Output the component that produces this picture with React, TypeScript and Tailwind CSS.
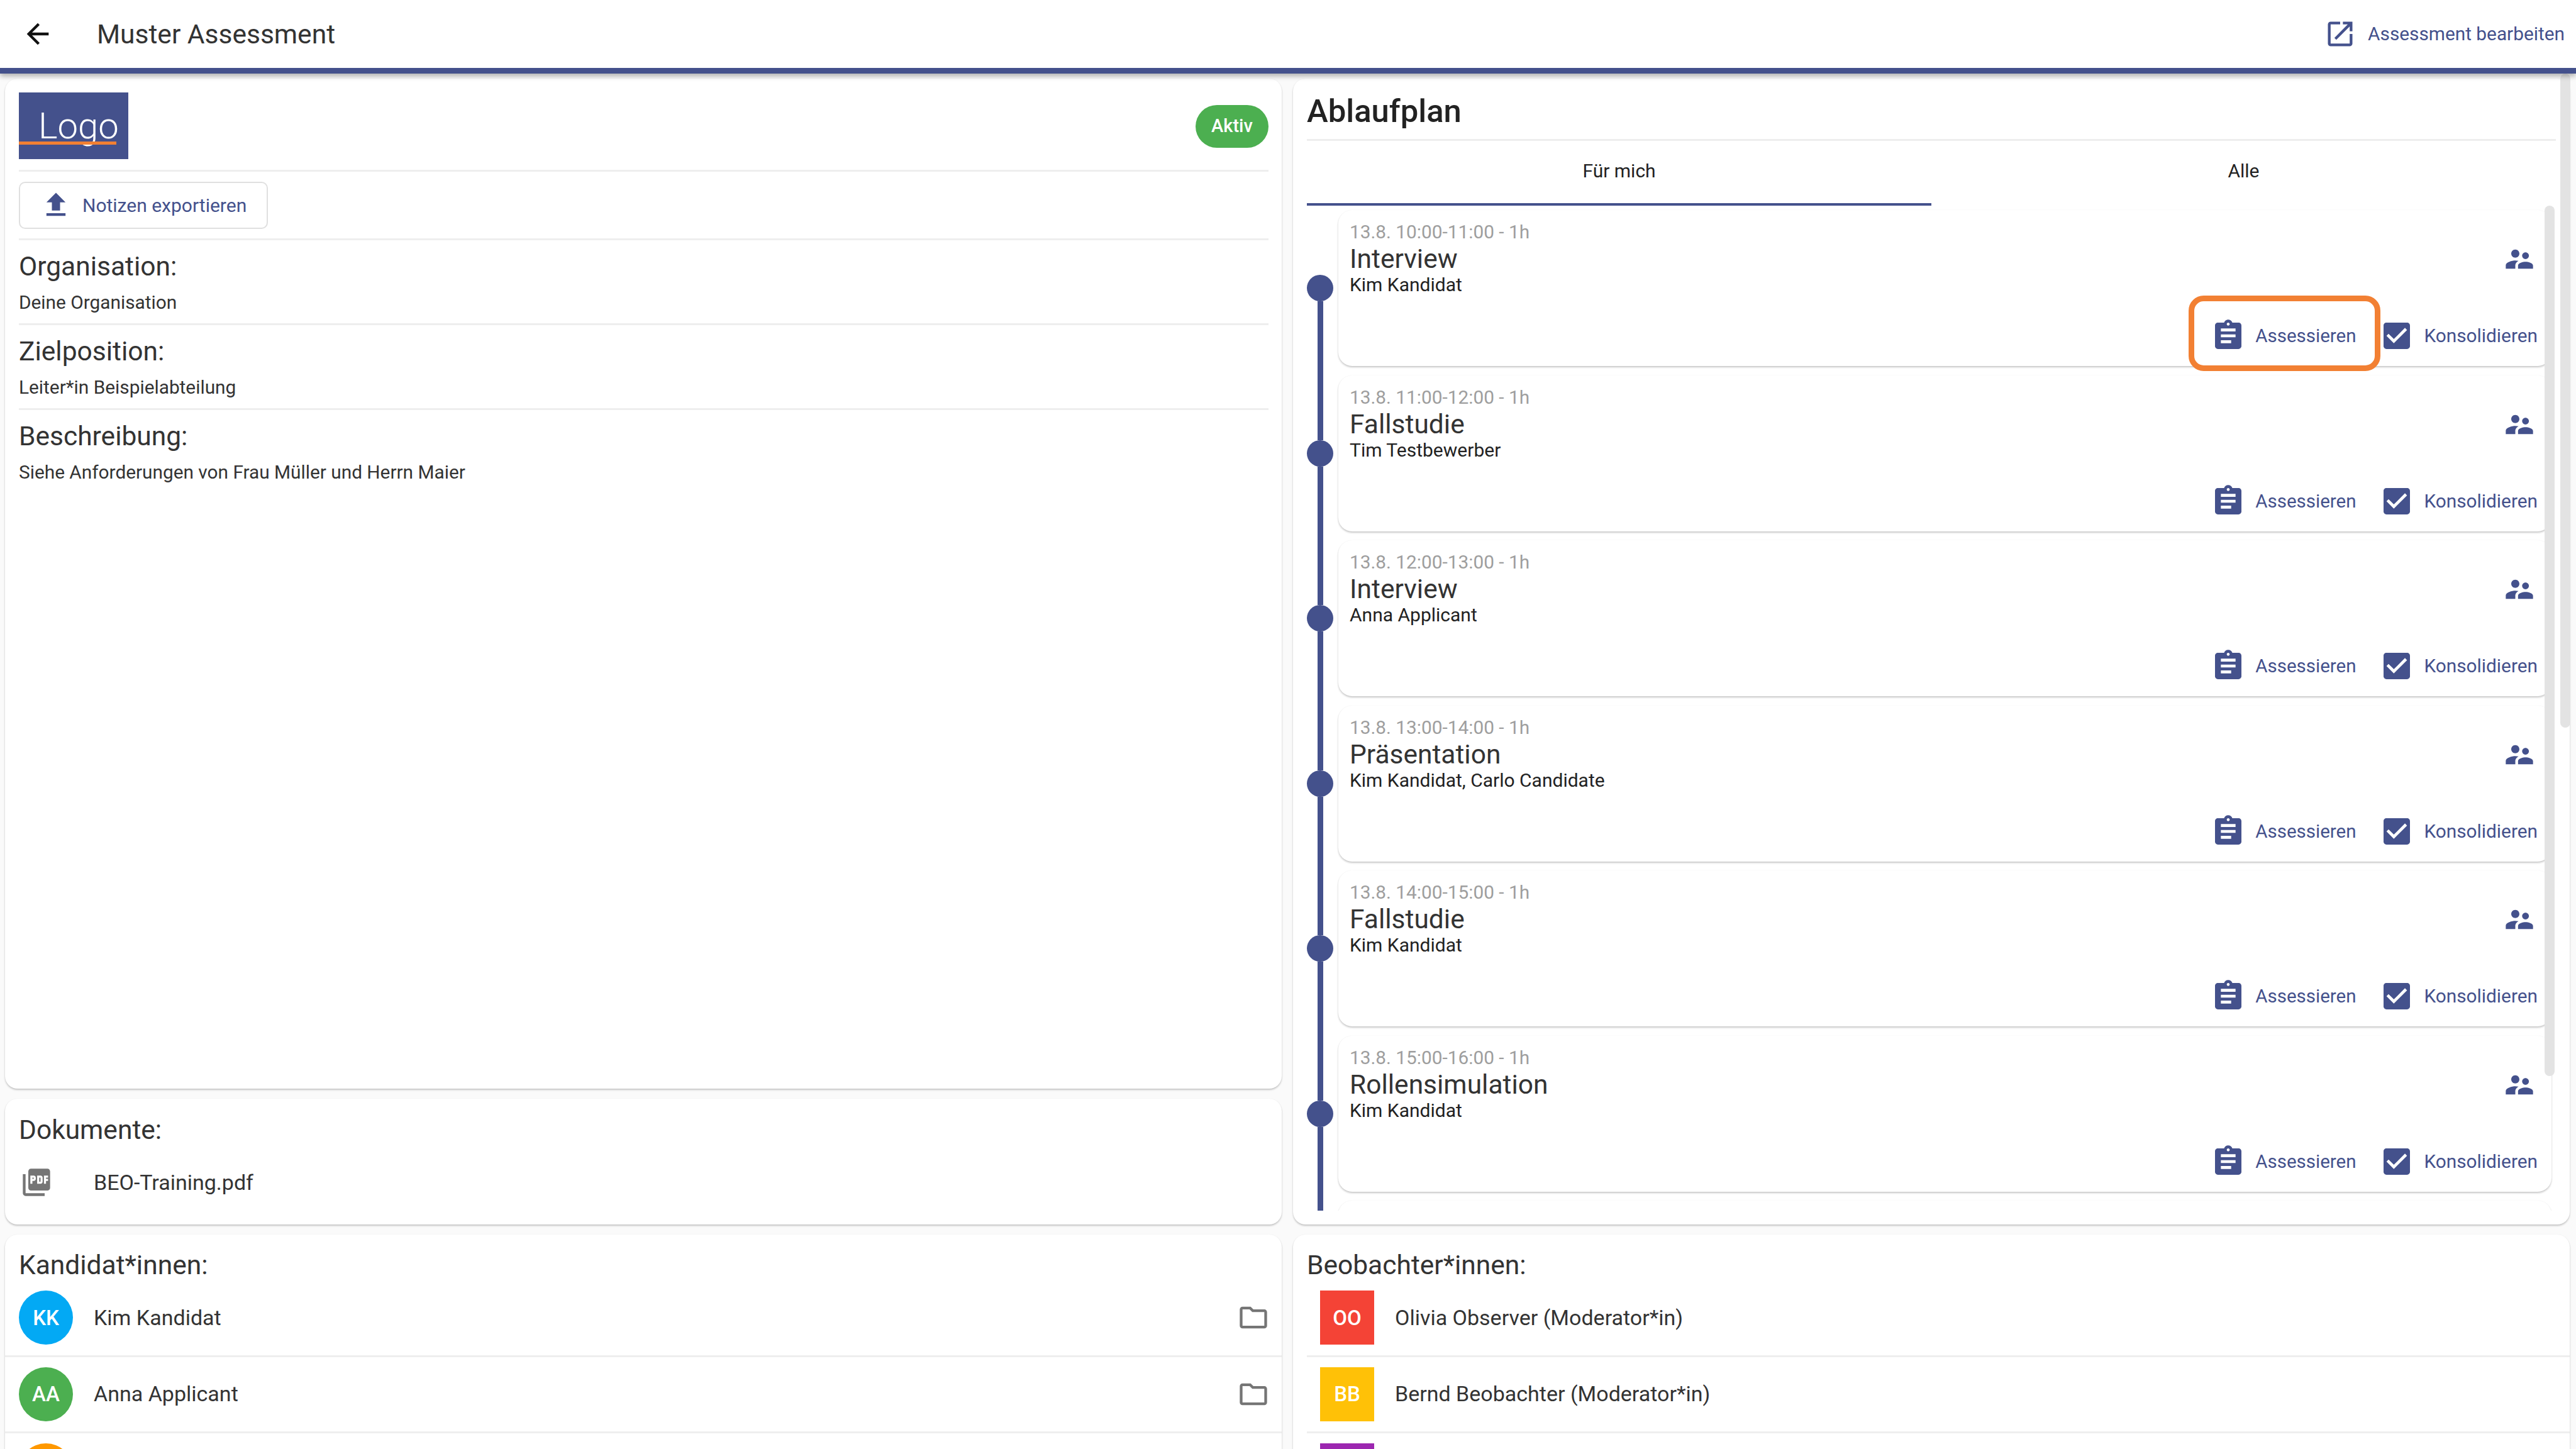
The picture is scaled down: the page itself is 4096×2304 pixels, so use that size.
function Ic({ d, cls }: { d: string; cls: string }) {
  return (
    <svg viewBox="0 0 24 24" className={cls}>
      <path d={d} />
    </svg>
  );
}

const pc = "fill-[#44518c]";
const gc = "fill-[#757575]";

const back = "M20 11H7.83l5.59-5.59L12 4l-8 8 8 8 1.41-1.41L7.83 13H20v-2z";
const launch = "M19 19H5V5h7V3H5c-1.11 0-2 .9-2 2v14c0 1.1.89 2 2 2h14c1.1 0 2-.9 2-2v-7h-2v7zM14 3v2h3.59l-9.83 9.83 1.41 1.41L19 6.41V10h2V3h-7z";
const upload = "M9 16h6v-6h4l-7-7-7 7h4zm-4 2h14v2H5z";
const assignment = "M19 3h-4.18C14.4 1.84 13.3 1 12 1c-1.3 0-2.4.84-2.82 2H5c-1.1 0-2 .9-2 2v14c0 1.1.9 2 2 2h14c1.1 0 2-.9 2-2V5c0-1.1-.9-2-2-2zm-7 0c.55 0 1 .45 1 1s-.45 1-1 1-1-.45-1-1 .45-1 1-1zm2 14H7v-2h7v2zm3-4H7v-2h10v2zm0-4H7V7h10v2z";
const check = "M19 3H5c-1.11 0-2 .9-2 2v14c0 1.1.89 2 2 2h14c1.11 0 2-.9 2-2V5c0-1.1-.89-2-2-2zm-9 14l-5-5 1.41-1.41L10 14.17l7.59-7.59L19 8l-9 9z";
const people = "M16.5 12c1.38 0 2.49-1.12 2.49-2.5S17.88 7 16.5 7 14 8.12 14 9.5s1.12 2.5 2.5 2.5zM9 11c1.66 0 2.99-1.34 2.99-3S10.66 5 9 5 6 6.34 6 8s1.34 3 3 3zm7.5 3c-1.83 0-5.5.92-5.5 2.75V19h11v-2.25c0-1.83-3.67-2.75-5.5-2.75zM9 13c-2.33 0-7 1.17-7 3.5V19h7v-2.25c0-.85.33-2.34 2.37-3.47C10.5 13.1 9.66 13 9 13z";
const pdf = "M20 2H8c-1.1 0-2 .9-2 2v12c0 1.1.9 2 2 2h12c1.1 0 2-.9 2-2V4c0-1.1-.9-2-2-2zm-8.5 7.5c0 .83-.67 1.5-1.5 1.5H9v2H7.5V7H10c.83 0 1.5.67 1.5 1.5v1zm5 2c0 .83-.67 1.5-1.5 1.5h-2.5V7H15c.83 0 1.5.67 1.5 1.5v3zm4-3H19v1h1.5V11H19v2h-1.5V7h3v1.5zM9 9.5h1v-1H9v1zM4 6H2v14c0 1.1.9 2 2 2h14v-2H4V6zm10 5.5h1v-3h-1v3z";
const folder = "M9.17 6l2 2H20v10H4V6h5.17M10 4H4c-1.1 0-1.99.9-1.99 2L2 18c0 1.1.9 2 2 2h16c1.1 0 2-.9 2-2V8c0-1.1-.9-2-2-2h-8l-2-2z";

const items = [
  ["13.8. 10:00-11:00 - 1h", "Interview", "Kim Kandidat"],
  ["13.8. 11:00-12:00 - 1h", "Fallstudie", "Tim Testbewerber"],
  ["13.8. 12:00-13:00 - 1h", "Interview", "Anna Applicant"],
  ["13.8. 13:00-14:00 - 1h", "Präsentation", "Kim Kandidat, Carlo Candidate"],
  ["13.8. 14:00-15:00 - 1h", "Fallstudie", "Kim Kandidat"],
  ["13.8. 15:00-16:00 - 1h", "Rollensimulation", "Kim Kandidat"],
];

const card = "bg-white rounded-[20px] shadow-[0_2px_3px_rgba(0,0,0,0.22),0_0_2px_rgba(0,0,0,0.04)]";
const rule = "h-[3px] bg-[#eeeeee]";
const label = "text-[42.5px] leading-[44px] text-[#333333]";
const small = "text-[29.8px] text-[#333333]";

function Field({ title, value }: { title: string; value: string }) {
  return (
    <div className="flex flex-col">
      <div className="h-[132px] pt-[20px]">
        <div className={label}>{title}</div>
        <div className={`mt-[15px] leading-[40px] ${small}`}>{value}</div>
      </div>
      <div className={rule} />
    </div>
  );
}

function Item({ t, i, first }: { t?: string[]; i: number; first: boolean }) {
  return (
    <div className="relative flex h-[262.5px] w-full shrink-0">
      <div className="flex h-full w-[50px] shrink-0 flex-col items-start">
        <div className="flex h-full w-[42px] flex-col items-center">
          <div className={`h-[103px] w-[9px] ${first ? "bg-transparent" : "bg-[#44518c]"}`} />
          <div className="h-[42px] w-[42px] shrink-0 rounded-full bg-[#44518c]" />
          <div className="w-[9px] flex-1 bg-[#44518c]" />
        </div>
      </div>
      <div className={`${card} flex h-[248px] w-[1929px] shrink-0 flex-col rounded-[22px]`}>
        {t && (
          <>
            <div className="flex justify-between pl-[18px] pr-[25px] pt-[17px]">
              <div className="flex flex-col">
                <div className="text-[29.8px] leading-[36px] text-[#9e9e9e]">{t[0]}</div>
                <div className="text-[42.5px] leading-[50px] text-[#333333]">{t[1]}</div>
                <div className="text-[30px] leading-[32px] text-[#222222]">{t[2]}</div>
              </div>
              <Ic d={people} cls={`mt-[35px] h-[52px] w-[52px] ${pc}`} />
            </div>
            <div className="mt-auto flex items-center justify-end gap-[37px] pb-[20px] pr-[22px]">
              <div className="flex items-center gap-[15px]">
                <Ic d={assignment} cls={`h-[56px] w-[56px] ${pc}`} />
                <span className="text-[29.5px] leading-[48px] text-[#44518c]">Assessieren</span>
              </div>
              <div className="flex items-center gap-[15px]">
                <Ic d={check} cls={`h-[56px] w-[56px] ${pc}`} />
                <span className="text-[29.8px] leading-[48px] text-[#44518c]">Konsolidieren</span>
              </div>
            </div>
          </>
        )}
      </div>
      {i === 0 && (
        <div className="absolute left-[1402px] top-[136px] h-[120px] w-[305px] rounded-[24px] border-[9px] border-[#f28033]" />
      )}
    </div>
  );
}

function Person({ initials, name, color, square, icon }: { initials?: string; name?: string; color: string; square?: boolean; icon?: boolean }) {
  return (
    <div className={`flex h-[121.5px] items-center border-b-[3px] border-[#eeeeee] ${square ? "ml-[22px] pl-[21px]" : "pl-[22px] pr-[19px]"}`}>
      <div className={`flex h-[86px] w-[86px] shrink-0 items-center justify-center text-[33px] font-medium text-white ${color} ${square ? "" : "rounded-full"}`}>
        {initials}
      </div>
      <div className="ml-[33px] flex-1 text-[34px] text-[#333333]">{name}</div>
      {icon && <Ic d={folder} cls={`h-[52px] w-[52px] ${gc}`} />}
    </div>
  );
}

export default function App() {
  return (
    <div className="relative flex h-[2304px] w-[4096px] flex-col overflow-hidden bg-[#fafafa] font-['Roboto',sans-serif]">
      <header className="z-10 flex h-[117px] shrink-0 items-center justify-between border-b-[9px] border-[#44518c] bg-white pl-[34px] pr-[18px] shadow-[0_4px_8px_rgba(0,0,0,0.3)]">
        <div className="flex items-center">
          <Ic d={back} cls="h-[52px] w-[52px] fill-[#111111]" />
          <div className="ml-[68px] pt-[2px] text-[42.5px] text-[#333333]">Muster Assessment</div>
        </div>
        <div className="flex items-center gap-[18px]">
          <Ic d={launch} cls={`h-[52px] w-[52px] ${pc}`} />
          <span className="text-[29.8px] text-[#44518c]">Assessment bearbeiten</span>
        </div>
      </header>

      <main className="grid grid-cols-[2030px_2030px] gap-x-[18px] pl-[8px] pt-[8px]">
        <div className="flex flex-col gap-[16px]">
          <section className={`${card} h-[1606px] pl-[22px] pr-[21px]`}>
            <div className="flex h-[145px] items-center justify-between pb-[18px] pt-[22px]">
              <div className="relative flex h-[106px] w-[174px] items-center bg-[#44518c] pl-[31px]">
                <span className="text-[58px] font-light leading-none text-white">Logo</span>
                <div className="absolute bottom-[23px] left-0 h-[5px] w-[155px] bg-[#f28033]" />
              </div>
              <div className="mt-[3px] flex h-[68px] w-[116px] items-center justify-center rounded-full bg-[#4caf50] text-[29px] font-medium text-white">Aktiv</div>
            </div>
            <div className={rule} />
            <div className="flex h-[106px] items-center">
              <button className="flex h-[75px] w-[396px] items-center rounded-[10px] border-[2px] border-[#e0e0e0] pl-[28px]">
                <Ic d={upload} cls={`ml-[3px] h-[52px] w-[52px] ${pc}`} />
                <span className="ml-[16px] text-[30px] text-[#44518c]">Notizen exportieren</span>
              </button>
            </div>
            <div className={rule} />
            <Field title="Organisation:" value="Deine Organisation" />
            <Field title="Zielposition:" value="Leiter*in Beispielabteilung" />
            <div className="pt-[20px]">
              <div className={label}>Beschreibung:</div>
              <div className={`mt-[15px] leading-[40px] ${small}`}>Siehe Anforderungen von Frau Müller und Herrn Maier</div>
            </div>
          </section>

          <section className={`${card} h-[200px] px-[22px] pt-[28px]`}>
            <div className={label}>Dokumente:</div>
            <div className="mt-[35px] flex items-center">
              <Ic d={pdf} cls={`ml-[2px] h-[52px] w-[52px] ${gc}`} />
              <div className="ml-[65px] text-[34px] text-[#333333]">BEO-Training.pdf</div>
            </div>
          </section>

          <section className={card}>
            <div className={`px-[22px] pb-[2px] pt-[27px] ${label}`}>Kandidat*innen:</div>
            <Person initials="KK" name="Kim Kandidat" color="bg-[#03a9f4]" icon />
            <Person initials="AA" name="Anna Applicant" color="bg-[#4caf50]" icon />
            <Person color="bg-[#ff9800]" />
          </section>
        </div>

        <div className="flex flex-col gap-[16px]">
          <section className={`${card} relative h-[1822px] pl-[22px]`}>
            <div className="mr-[22px] flex h-[99px] items-center border-b-[3px] border-[#eeeeee] pt-[8px]">
              <h2 className="text-[50.8px] font-medium text-[#222222]">Ablaufplan</h2>
            </div>
            <div className="mr-[22px] grid h-[103px] grid-cols-2 text-[30px] text-[#222222]">
              <div className="flex items-center justify-center border-b-[4px] border-[#44518c] pb-[4px]">Für mich</div>
              <div className="flex items-center justify-center pb-[8px]">Alle</div>
            </div>
            <div className="relative h-[1598px] overflow-hidden pt-[7px]">
              {items.map((t, i) => (
                <Item key={i} t={t} i={i} first={i === 0} />
              ))}
              <Item i={6} first={false} />
            </div>
            <div className="absolute right-[24px] top-[202px] h-[1384px] w-[16px] rounded-full bg-[#e3e3e3]" />
          </section>

          <section className={card}>
            <div className={`px-[22px] pb-[2px] pt-[27px] ${label}`}>Beobachter*innen:</div>
            <Person initials="OO" name="Olivia Observer (Moderator*in)" color="bg-[#f44336]" square />
            <Person initials="BB" name="Bernd Beobachter (Moderator*in)" color="bg-[#ffc107]" square />
            <Person color="bg-[#9c27b0]" square />
          </section>
        </div>
      </main>

      <div className="absolute right-[9px] top-[117px] h-[1040px] w-[16px] rounded-full bg-[#e3e3e3]" />
    </div>
  );
}
